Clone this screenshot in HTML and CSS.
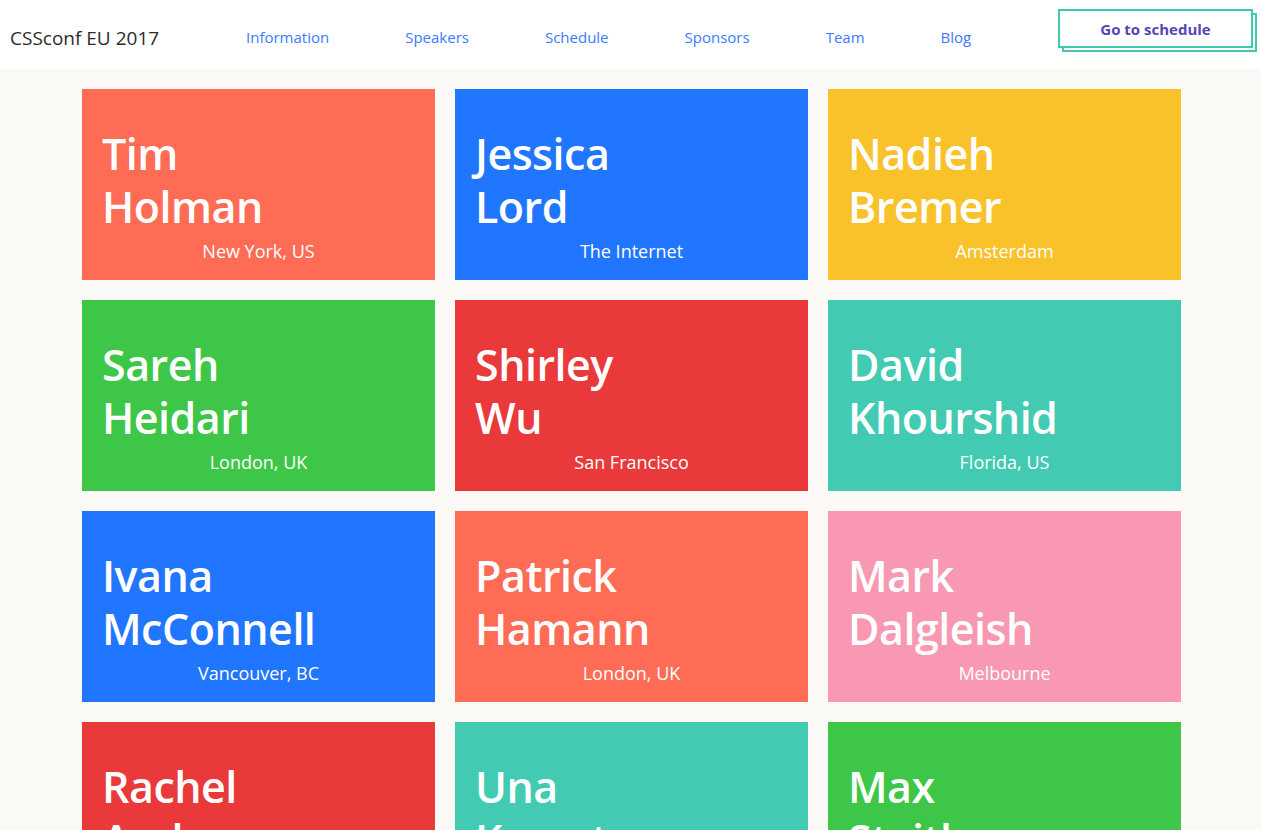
FILE: index.html
```html
<!DOCTYPE html>
<html lang="en">
<head>
<meta charset="utf-8">
<title>CSSconf EU 2017 – Speakers</title>
<link rel="stylesheet" href="styles.css">
</head>
<body>
<header class="topbar">
  <div class="logo">CSSconf EU 2017</div>
  <nav class="nav">
    <a href="#">Information</a>
    <a href="#">Speakers</a>
    <a href="#">Schedule</a>
    <a href="#">Sponsors</a>
    <a href="#">Team</a>
    <a href="#">Blog</a>
  </nav>
  <a class="cta" href="#"><span>Go to schedule</span></a>
</header>
<main class="grid">
  <div class="card coral"><h2>Tim<br>Holman</h2><p>New York, US</p></div>
  <div class="card blue"><h2>Jessica<br>Lord</h2><p>The Internet</p></div>
  <div class="card yellow"><h2>Nadieh<br>Bremer</h2><p>Amsterdam</p></div>
  <div class="card green"><h2>Sareh<br>Heidari</h2><p>London, UK</p></div>
  <div class="card red"><h2>Shirley<br>Wu</h2><p>San Francisco</p></div>
  <div class="card teal"><h2>David<br>Khourshid</h2><p>Florida, US</p></div>
  <div class="card blue"><h2>Ivana<br>McConnell</h2><p>Vancouver, BC</p></div>
  <div class="card coral"><h2>Patrick<br>Hamann</h2><p>London, UK</p></div>
  <div class="card pink"><h2>Mark<br>Dalgleish</h2><p>Melbourne</p></div>
  <div class="card red"><h2>Rachel<br>Andrew</h2><p>Bristol, UK</p></div>
  <div class="card teal"><h2>Una<br>Kravets</h2><p>Austin, US</p></div>
  <div class="card green"><h2>Max<br>Steitle</h2><p>Berlin</p></div>
</main>
</body>
</html>
```

FILE: styles.css
```css
* { box-sizing: border-box; }
html, body { margin: 0; padding: 0; }
body {
  background: #faf9f5;
  font-family: "Open Sans", "Noto Sans", "Liberation Sans", sans-serif;
  overflow: hidden;
  height: 830px;
}
.topbar {
  height: 69px;
  background: #ffffff;
  display: flex;
  align-items: flex-start;
  padding-left: 10px;
}
.logo {
  font-size: 19px;
  color: #2b2b2b;
  margin-top: 25px;
  line-height: 26px;
  width: 150px;
  white-space: nowrap;
}
.nav {
  display: flex;
  gap: 76px;
  margin-left: 86px;
  margin-top: 26px;
}
.nav a {
  color: #3b7bff;
  text-decoration: none;
  font-size: 15px;
  line-height: 22px;
}
.cta {
  margin-left: auto;
  margin-right: 8px;
  margin-top: 9px;
  width: 195px;
  height: 39px;
  border: 2px solid #41c9b0;
  box-shadow: 4px 4px 0 -2px #ffffff, 4px 4px 0 0 #41c9b0;
  display: flex;
  justify-content: center;
  align-items: center;
  text-decoration: none;
}
.cta span {
  color: #5845b5;
  font-weight: 700;
  font-size: 15px;
  line-height: 20px;
}
.grid {
  display: grid;
  grid-template-columns: repeat(3, 353px);
  gap: 20px;
  margin: 20px 0 0 82px;
}
.card {
  height: 191px;
  padding: 0 20px 16px 20px;
  display: flex;
  flex-direction: column;
  justify-content: flex-end;
  color: #ffffff;
}
.card h2 {
  margin: 0 0 5px 0;
  font-size: 43px;
  font-weight: 600;
  line-height: 53px;
  letter-spacing: -0.5px;
}
.card p {
  margin: 0;
  text-align: center;
  font-size: 18px;
  line-height: 26px;
}
.coral { background: #ff6c56; }
.blue { background: #2176ff; }
.yellow { background: #f9c22a; }
.green { background: #3ec648; }
.red { background: #e9393b; }
.teal { background: #42cbb2; }
.pink { background: #f898b3; }
```
